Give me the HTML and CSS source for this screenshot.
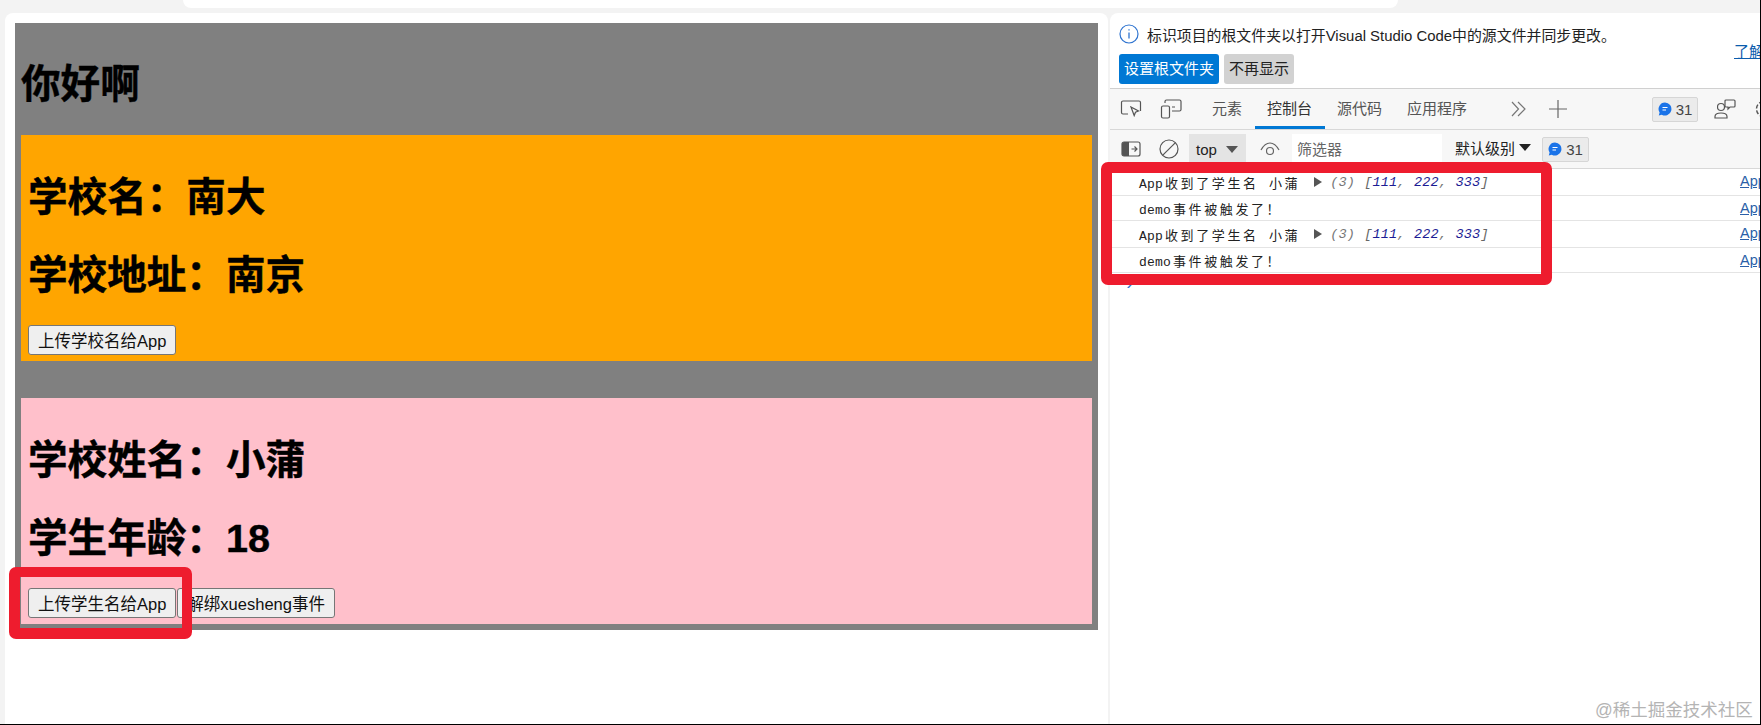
FILE: index.html
```html
<!DOCTYPE html>
<html lang="zh-CN">
<head>
<meta charset="utf-8">
<title>Vue demo</title>
<link rel="stylesheet" href="styles.css">
</head>
<body>
<div class="frame">
  <div class="topbar"></div>
  <div class="main">
    <section class="page">
      <div class="app">
        <h1 class="title">你好啊</h1>
        <div class="card school">
          <h2 class="line first">学校名&#xFF1A;南大</h2>
          <h2 class="line">学校地址&#xFF1A;南京</h2>
          <div class="btns"><button class="btn">上传学校名给App</button></div>
        </div>
        <div class="card student">
          <h2 class="line first">学校姓名&#xFF1A;小蒲</h2>
          <h2 class="line">学生年龄&#xFF1A;18</h2>
          <div class="btns"><button class="btn">上传学生名给App</button><button class="btn">解绑xuesheng事件</button></div>
        </div>
      </div>
    </section>
    <section class="devtools">
      <div class="info">
        <div class="info-row">
          <svg class="info-icon" viewBox="0 0 20 20" width="20" height="20"><circle cx="10" cy="10" r="9" fill="none" stroke="#2f74d0" stroke-width="1.2"/><path d="M10 8.500v6M10 5.200v1.400" stroke="#2f74d0" stroke-width="1.300" fill="none"/></svg>
          <span class="info-text">标识项目的根文件夹以打开Visual Studio Code中的源文件并同步更改。</span>
        </div>
        <a class="learn">了解</a>
        <div class="info-actions"><span class="act primary">设置根文件夹</span><span class="act">不再显示</span></div>
      </div>
      <div class="tabs">
        <svg class="tool-icon" viewBox="0 0 22 20" width="22" height="20"><path d="M8 15H3a1.500 1.500 0 0 1-1.500-1.500v-10A1.500 1.500 0 0 1 3 2h16a1.500 1.500 0 0 1 1.500 1.500V12" fill="none" stroke="#555" stroke-width="1.200"/><path d="M11 8l7.500 4-3 1.200-1.300 3.300z" fill="none" stroke="#555" stroke-width="1.200"/></svg>
        <svg class="tool-icon second" viewBox="0 0 22 20" width="22" height="20"><rect x="1.500" y="7" width="8" height="12" rx="1.500" fill="none" stroke="#555" stroke-width="1.200"/><path d="M5 4V2.500A1.500 1.500 0 0 1 6.500 1h13A1.500 1.500 0 0 1 21 2.500v8a1.500 1.500 0 0 1-1.500 1.500H12M12 8h3" fill="none" stroke="#555" stroke-width="1.200"/></svg>
        <span class="tab t1">元素</span>
        <span class="tab active">控制台</span>
        <span class="tab">源代码</span>
        <span class="tab">应用程序</span>
        <svg class="chev" viewBox="0 0 15 16" width="15" height="16"><path d="M1 1l6.500 7L1 15M7 1l7 7-7 7" fill="none" stroke="#777" stroke-width="1.200"/></svg>
        <svg class="plus" viewBox="0 0 18 18" width="18" height="18"><path d="M9 0v18M0 9h18" stroke="#666" stroke-width="1.200"/></svg>
        <span class="badge tab-badge"><svg class="bubble" viewBox="0 0 14 14" width="14" height="14"><path d="M7 .5a6.500 6.500 0 1 1-3.200 12.200L.8 13.500l.8-3A6.500 6.500 0 0 1 7 .5z" fill="#1a73e8"/><path d="M4.500 5.500h5M4.500 8h3.500" stroke="#fff" stroke-width="1"/></svg>31</span>
        <svg class="people" viewBox="0 0 22 20" width="22" height="20"><circle cx="7" cy="8" r="3.500" fill="none" stroke="#555" stroke-width="1.200"/><path d="M1 19v-1.500C1 15 3 14 7 14s6 1 6 3.500V19z" fill="none" stroke="#555" stroke-width="1.200"/><path d="M12 1h8a1 1 0 0 1 1 1v5a1 1 0 0 1-1 1h-4l-2 2V8h-2a1 1 0 0 1-1-1V2a1 1 0 0 1 1-1z" fill="none" stroke="#555" stroke-width="1.200"/></svg>
        <svg class="gear" viewBox="0 0 20 20" width="20" height="20"><circle cx="10" cy="10" r="7.500" fill="none" stroke="#555" stroke-width="1.500" stroke-dasharray="4 2"/></svg>
      </div>
      <div class="toolbar">
        <svg class="tool-icon" viewBox="0 0 20 18" width="20" height="18"><rect x="1" y="2" width="18" height="14" rx="2" fill="none" stroke="#555" stroke-width="1.200"/><path d="M1 4a2 2 0 0 1 2-2h5v14H3a2 2 0 0 1-2-2z" fill="#555"/><path d="M10.500 9H16M13.500 6.500L16 9l-2.500 2.500" fill="none" stroke="#555" stroke-width="1.200"/></svg>
        <svg class="tool-icon second" viewBox="0 0 20 20" width="20" height="20"><circle cx="10" cy="10" r="9" fill="none" stroke="#555" stroke-width="1.200"/><path d="M3.800 16.200L16.200 3.800" stroke="#555" stroke-width="1.200"/></svg>
        <span class="context">top<i class="caret"></i></span>
        <svg class="eye" viewBox="0 0 20 14" width="20" height="14"><path d="M1 8C4 2.500 7 1 10 1s6 1.500 9 7" fill="none" stroke="#666" stroke-width="1.200"/><circle cx="10" cy="9" r="3.500" fill="none" stroke="#666" stroke-width="1.200"/></svg>
        <span class="filter">筛选器</span>
        <span class="level">默认级别<i class="caret dark"></i></span>
        <span class="badge bar-badge"><svg class="bubble" viewBox="0 0 14 14" width="14" height="14"><path d="M7 .5a6.500 6.500 0 1 1-3.200 12.200L.8 13.500l.8-3A6.500 6.500 0 0 1 7 .5z" fill="#1a73e8"/><path d="M4.500 5.500h5M4.500 8h3.500" stroke="#fff" stroke-width="1"/></svg>31</span>
      </div>
      <div class="console">
        <div class="row r1"><span class="msg"><span class="lat">App</span>收到了学生名 小蒲</span><span class="tri"></span><span class="arr"><em>(3)</em><em class="br open">[</em><b>111</b><em>,</em> <b>222</b><em>,</em> <b>333</b><em class="br">]</em></span><a class="src">App</a></div>
        <div class="row r2"><span class="msg"><span class="lat">demo</span>事件被触发了&#xFF01;</span><a class="src">App</a></div>
        <div class="row r1"><span class="msg"><span class="lat">App</span>收到了学生名 小蒲</span><span class="tri"></span><span class="arr"><em>(3)</em><em class="br open">[</em><b>111</b><em>,</em> <b>222</b><em>,</em> <b>333</b><em class="br">]</em></span><a class="src">App</a></div>
        <div class="row r2"><span class="msg"><span class="lat">demo</span>事件被触发了&#xFF01;</span><a class="src">App</a></div>
        <div class="prompt">›</div>
      </div>
    </section>
  </div>
  <div class="mark mark-console"></div>
  <div class="mark mark-button"></div>
  <div class="watermark">@稀土掘金技术社区</div>
</div>
</body>
</html>
```
FILE: styles.css
```css
* { box-sizing: border-box; }
html, body { margin: 0; height: 100%; overflow: hidden; background: #fff; }
body { font-family: "Liberation Sans", "Noto Sans CJK SC", sans-serif; color: #000; }
.frame { position: relative; width: 1761px; height: 725px; background: #f3f3f3; border-right: 1px solid #000; border-bottom: 1px solid #000; overflow: hidden; }
.topbar { width: 1215px; height: 8px; margin-left: 183px; background: #fff; border-radius: 0 0 12px 12px; }
.main { display: flex; margin-top: 5px; height: 711px; }
.page { width: 1103px; margin-left: 5px; background: #fff; border-radius: 8px 8px 0 0; padding: 10px 10px 0; }
.app { background: #808080; padding: 0 6px 6px; }
.title { margin: 0; padding: 38px 0 28px; font-size: 39.6px; line-height: 46px; font-weight: 700; -webkit-text-stroke: .4px #000; }
.card { padding: 39px 7px 6px; }
.school { background: #ffa500; margin-bottom: 37px; }
.student { background: #ffc0cb; }
.line { margin: 32px 0 0; font-size: 39.6px; line-height: 46px; font-weight: 700; -webkit-text-stroke: .4px #000; }
.line.first { margin-top: 0; }
.btns { display: flex; gap: 1px; margin-top: 27px; }
.btn { height: 30px; padding: 0 9px; font: 16.5px "Liberation Sans", "Noto Sans CJK SC", sans-serif; color: #111; background: #efefef; border: 1px solid #767676; border-radius: 3px; white-space: nowrap; }

.devtools { flex: 1; min-width: 0; margin-left: 2px; background: #fff; border-radius: 8px 0 0 0; overflow: hidden; }
.info { position: relative; height: 76px; padding: 11px 0 0 9px; border-bottom: 1px solid #d0d0d0; }
.info-row { display: flex; align-items: center; height: 20px; gap: 8px; font-size: 14.900px; color: #222; }
.info-text { white-space: nowrap; }
.learn { position: absolute; left: 624px; top: 27px; font-size: 15px; white-space: nowrap; color: #0b5cad; text-decoration: underline; }
.info-actions { display: flex; gap: 5px; margin-top: 10px; }
.act { height: 30px; padding: 0 5px; line-height: 29px; font-size: 15px; color: #222; background: #d2d2d2; border-radius: 3px; white-space: nowrap; }
.act.primary { background: #0078d4; color: #fff; }

.tabs, .toolbar { display: flex; align-items: center; background: #f7f7f7; border-bottom: 1px solid #d8d8d8; white-space: nowrap; }
.tabs { height: 41px; padding-left: 10px; font-size: 15px; color: #555; }
.tool-icon { flex: none; }
.tool-icon.second { margin-left: 18px; }
.tab { flex: none; height: 100%; padding: 0 12.500px; line-height: 39px; }
.tab.t1 { margin-left: 17.500px; }
.tab.active { color: #333; border-bottom: 3px solid #0078d4; }
.chev { margin-left: 31px; flex: none; }
.plus { margin-left: 23.500px; flex: none; }
.badge { flex: none; display: inline-flex; align-items: center; justify-content: center; gap: 4px; width: 46px; height: 25px; background: #ebebeb; border: 1px solid #d6d6d6; border-radius: 2px; font-size: 15px; color: #444; }
.tab-badge { margin-left: 85px; }
.bubble { flex: none; }
.people { margin-left: 16px; flex: none; }
.gear { margin-left: 18px; flex: none; }
.toolbar { height: 39px; padding-left: 11px; font-size: 15px; color: #222; }
.context { display: flex; align-items: center; width: 57px; height: 34px; margin-left: 10px; padding: 0 0 3px 7px; background: #e4e4e4; align-self: flex-end; }
.caret { display: inline-block; width: 0; height: 0; margin-left: 9px; border-left: 6px solid transparent; border-right: 6px solid transparent; border-top: 7px solid #555; }
.caret.dark { border-top-color: #222; margin-left: 4px; }
.eye { margin-left: 14px; flex: none; }
.filter { width: 150px; height: 34px; line-height: 32px; margin-left: 12px; padding-left: 5px; background: #fff; color: #666; align-self: flex-end; }
.level { display: flex; align-items: center; margin-left: 13px; padding-bottom: 3px; }
.bar-badge { margin-left: 11px; width: 47px; }

.console { position: relative; background: #fff; height: 500px; font-family: "Liberation Mono", "Noto Sans CJK SC", monospace; font-size: 13px; color: #222; }
.row { position: relative; display: flex; align-items: center; padding-left: 29px; border-bottom: 1px solid #e4e4e4; white-space: nowrap; }
.r1 { height: 27px; }
.r2 { height: 25px; }
.msg { letter-spacing: 2.600px; }
.lat { letter-spacing: .2px; margin-right: 2px; }
.tri { width: 0; height: 0; margin-left: 14px; border-left: 8px solid #555; border-top: 5px solid transparent; border-bottom: 5px solid transparent; }
.arr { margin-left: 8px; font-style: italic; font-size: 13.500px; letter-spacing: .2px; }
.arr em { color: #777; }
.arr .br { color: #666; }
.arr .open { margin-left: 9px; }
.arr b { font-weight: 400; color: #1c1c94; }
.src { position: absolute; left: 630px; top: 4px; font-family: "Liberation Sans", sans-serif; font-size: 14.500px; color: #2b5fa8; text-decoration: underline; }
.prompt { padding: 2px 0 0 14px; color: #2f74d0; font-size: 18px; line-height: 18px; }

.mark { position: absolute; border-style: solid; border-color: #ee1c2e; border-radius: 7px; }
.mark-console { left: 1101px; top: 162px; width: 451px; height: 123px; border-width: 11px; }
.mark-button { left: 9px; top: 567px; width: 183px; height: 72px; border-width: 10px 10px 11px 11px; }
.watermark { position: absolute; left: 1595px; top: 698px; font-size: 17.500px; line-height: 24px; color: #b4b4b4; white-space: nowrap; }
```
